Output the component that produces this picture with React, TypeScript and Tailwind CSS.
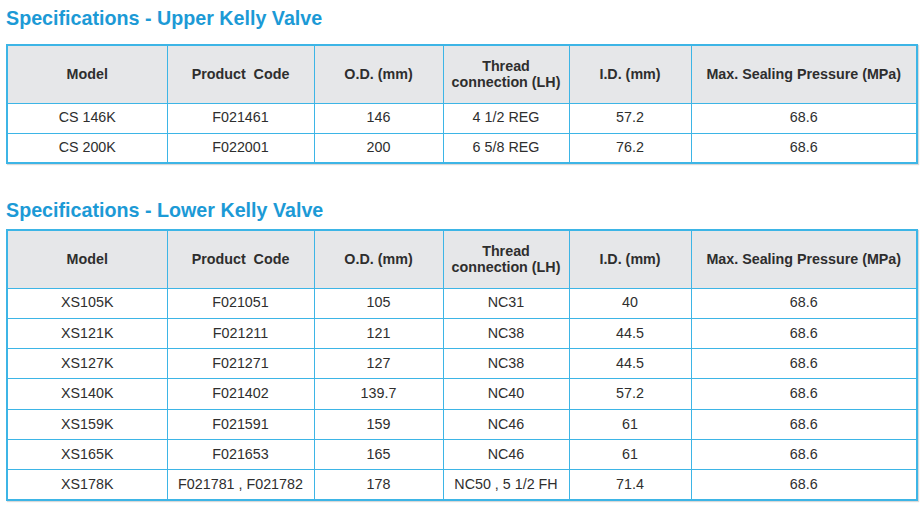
const cols = ['w-[160px]', 'w-[147px]', 'w-[129px]', 'w-[126px]', 'w-[122px]', 'w-[226px]'];

type Row = [string, string, string, string, string, string];

const upper: Row[] = [
  ['CS 146K', 'F021461', '146', '4 1/2 REG', '57.2', '68.6'],
  ['CS 200K', 'F022001', '200', '6 5/8 REG', '76.2', '68.6'],
];

const lower: Row[] = [
  ['XS105K', 'F021051', '105', 'NC31', '40', '68.6'],
  ['XS121K', 'F021211', '121', 'NC38', '44.5', '68.6'],
  ['XS127K', 'F021271', '127', 'NC38', '44.5', '68.6'],
  ['XS140K', 'F021402', '139.7', 'NC40', '57.2', '68.6'],
  ['XS159K', 'F021591', '159', 'NC46', '61', '68.6'],
  ['XS165K', 'F021653', '165', 'NC46', '61', '68.6'],
  ['XS178K', 'F021781 , F021782', '178', 'NC50 , 5 1/2 FH', '71.4', '68.6'],
];

function SpecTable({ title, rows, gap, rowH }: { title: string; rows: Row[]; gap: string; rowH: string }) {
  return (
    <section>
      <h2 className="pl-[6px] text-[19.7px] font-bold leading-[24px] text-[#1c9ad6]">{title}</h2>
      <table
        className={`${gap} ml-[6px] w-[910px] table-fixed border-collapse border-2 border-[#3db5e6] text-[14.3px] text-[#2e2e2e] shadow-[1px_1px_1px_rgba(0,0,0,0.15)]`}
      >
        <colgroup>
          {cols.map((c, i) => (
            <col key={i} className={c} />
          ))}
        </colgroup>
        <thead>
          <tr className="h-[58px] bg-[#e6e7e9]">
            <th className="border border-[#3db5e6] font-bold">Model</th>
            <th className="border border-[#3db5e6] font-bold">Product&nbsp; Code</th>
            <th className="border border-[#3db5e6] font-bold">O.D. (mm)</th>
            <th className="border border-[#3db5e6] font-bold leading-[16px]">
              Thread
              <br />
              connection (LH)
            </th>
            <th className="border border-[#3db5e6] font-bold">I.D. (mm)</th>
            <th className="border border-[#3db5e6] font-bold">Max. Sealing Pressure (MPa)</th>
          </tr>
        </thead>
        <tbody>
          {rows.map((r) => (
            <tr key={r[0]} className={rowH}>
              {r.map((v, i) => (
                <td key={i} className="border border-[#3db5e6] text-center">
                  {v}
                </td>
              ))}
            </tr>
          ))}
        </tbody>
      </table>
    </section>
  );
}

export default function App() {
  return (
    <div className="h-[507px] w-[922px] overflow-hidden bg-white pt-[6px] font-['Liberation_Sans',Arial,sans-serif]">
      <SpecTable title="Specifications - Upper Kelly Valve" rows={upper} gap="mt-[14px]" rowH="h-[30px]" />
      <div className="h-[34px]" />
      <SpecTable title="Specifications - Lower Kelly Valve" rows={lower} gap="mt-[7px]" rowH="h-[30.3px]" />
    </div>
  );
}
